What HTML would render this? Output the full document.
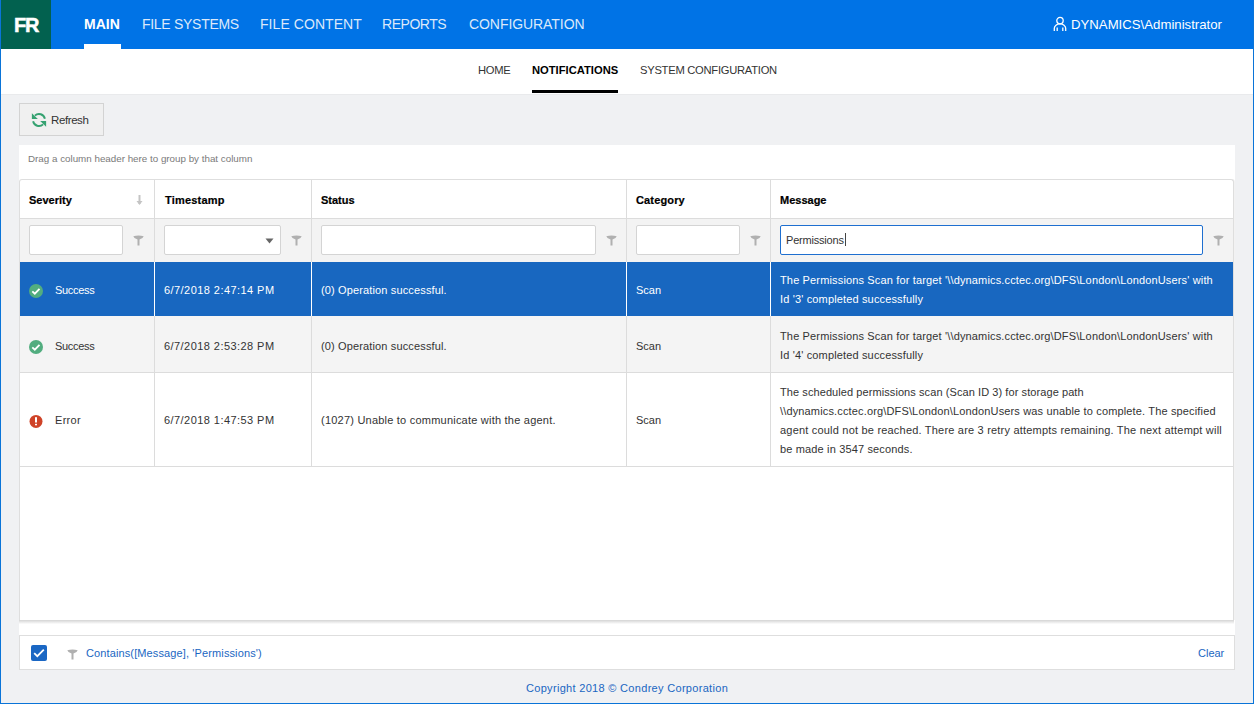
<!DOCTYPE html>
<html><head><meta charset="utf-8">
<style>
*{box-sizing:border-box;}
html,body{margin:0;padding:0;}
body{width:1254px;height:704px;overflow:hidden;position:relative;background:#f0f1f3;font-family:"Liberation Sans",sans-serif;}
.abs{position:absolute;}
.t{position:absolute;white-space:nowrap;}
#hdr{left:0;top:0;width:1254px;height:49px;background:#0073e6;}
#logo{left:1px;top:0;width:50px;height:49px;background:#02614f;color:#fff;font-weight:bold;font-size:20px;line-height:50px;text-align:center;letter-spacing:-1.4px;-webkit-text-stroke:0.5px #fff;}
.nav{top:0;height:49px;line-height:49px;font-size:14px;color:#dce9fa;}
#sub{left:0;top:49px;width:1254px;height:46px;background:#fff;border-bottom:1px solid #e9eaec;}
.snav{top:49px;line-height:42px;font-size:11.2px;color:#333;}
#wl{left:0;top:0;width:1px;height:704px;background:#0a74d8;}
#wr{left:1253px;top:0;width:1px;height:704px;background:#0a74d8;}
#wb{left:0;top:703px;width:1254px;height:1px;background:#0a74d8;}
#btn{left:19px;top:103px;width:85px;height:33px;background:#f0f0f0;border:1px solid #d3d3d3;}
#grp{left:19px;top:145px;width:1216px;height:524px;background:#fff;}
#grid{left:19px;top:179px;width:1215px;height:441px;background:#fff;border:1px solid #dedede;border-bottom:none;border-radius:3px 3px 0 0;box-shadow:1px 0 0 rgba(0,0,0,.05);}
.vl{position:absolute;top:180px;width:1px;background:#dcdcdc;}
.hl{position:absolute;left:20px;width:1213px;height:1px;background:#dcdcdc;}
.hd{top:180px;line-height:38px;font-size:11px;font-weight:bold;color:#000;-webkit-text-stroke:0.2px #000;}
.inp{position:absolute;top:225px;height:30px;background:#fff;border:1px solid #d4d4d4;border-radius:2px;}
.cell{font-size:11px;color:#333;line-height:19px;}
.sel{color:#fff;}
.lnk{color:#1a66c2;}
</style></head><body>
<div id="hdr" class="abs"></div>
<div id="logo" class="abs">FR</div>
<div class="abs" style="left:84px;top:44px;width:37px;height:5px;background:#fff;"></div>
<div class="t nav" style="left:84px;color:#fff;font-weight:bold;font-size:14px;">MAIN</div>
<div class="t nav" style="left:142px;letter-spacing:-0.29px;">FILE SYSTEMS</div>
<div class="t nav" style="left:260px;letter-spacing:0.06px;">FILE CONTENT</div>
<div class="t nav" style="left:382px;letter-spacing:-0.47px;">REPORTS</div>
<div class="t nav" style="left:469px;letter-spacing:-0.07px;">CONFIGURATION</div>
<svg class="abs" style="left:1053px;top:16px" width="14" height="16" viewBox="0 0 14 16">
 <circle cx="7" cy="4.6" r="3.2" fill="none" stroke="#fff" stroke-width="1.3"/>
 <path d="M1.3 15 V12.3 A5.7 4.4 0 0 1 12.7 12.3 V15" fill="none" stroke="#fff" stroke-width="1.3"/>
 <path d="M4.2 11.6 V15 M9.8 11.6 V15" stroke="#fff" stroke-width="1.3"/>
</svg>
<div class="t nav" style="left:1071px;color:#fff;font-size:13.2px;">DYNAMICS\Administrator</div>

<div id="sub" class="abs"></div>
<div class="t snav" style="left:478px;letter-spacing:-0.3px;">HOME</div>
<div class="t snav" style="left:532px;color:#000;font-weight:bold;">NOTIFICATIONS</div>
<div class="abs" style="left:532px;top:90px;width:86px;height:3px;background:#000;"></div>
<div class="t snav" style="left:640px;letter-spacing:-0.26px;">SYSTEM CONFIGURATION</div>

<div id="btn" class="abs"></div>
<svg class="abs" style="left:31px;top:112px" width="16" height="16" viewBox="0 0 16 16">
 <path d="M13.9 6.8 A6 6 0 0 0 3.9 3.6" fill="none" stroke="#36a271" stroke-width="1.9"/>
 <path d="M0.9 1.2 L0.9 7.1 L6.8 7.1 Z" fill="#36a271"/>
 <path d="M2.1 9.2 A6 6 0 0 0 12.1 12.4" fill="none" stroke="#36a271" stroke-width="1.9"/>
 <path d="M15.1 14.8 L15.1 8.9 L9.2 8.9 Z" fill="#36a271"/>
</svg>
<div class="t" style="left:51px;top:110px;font-size:11.5px;line-height:20px;color:#333;letter-spacing:-0.4px;">Refresh</div>

<div id="grp" class="abs"></div>
<div class="t" style="left:28px;top:149px;font-size:9.8px;line-height:20px;color:#7a7a7a;">Drag a column header here to group by that column</div>

<div id="grid" class="abs"></div>
<!-- filter row bg -->
<div class="abs" style="left:20px;top:219px;width:1213px;height:43px;background:#f3f3f3;"></div>
<div class="hl" style="top:218px;"></div>
<!-- rows -->
<div class="abs" style="left:20px;top:262px;width:1213px;height:54px;background:#1867c0;"></div>
<div class="abs" style="left:20px;top:316px;width:1213px;height:56px;background:#f4f4f4;"></div>
<div class="hl" style="top:372px;"></div>
<div class="hl" style="top:466px;"></div>
<!-- vertical lines -->
<div class="vl" style="left:154px;height:286px;"></div>
<div class="vl" style="left:311px;height:286px;"></div>
<div class="vl" style="left:626px;height:286px;"></div>
<div class="vl" style="left:770px;height:286px;"></div>
<div class="abs" style="left:154px;top:262px;width:1px;height:54px;background:#fff;"></div>
<div class="abs" style="left:311px;top:262px;width:1px;height:54px;background:#fff;"></div>
<div class="abs" style="left:626px;top:262px;width:1px;height:54px;background:#fff;"></div>
<div class="abs" style="left:770px;top:262px;width:1px;height:54px;background:#fff;"></div>

<!-- headers -->
<div class="t hd" style="left:29px;top:181px;">Severity</div>
<div class="t hd" style="left:165px;top:181px;letter-spacing:0.2px;">Timestamp</div>
<div class="t hd" style="left:321px;top:181px;">Status</div>
<div class="t hd" style="left:636px;top:181px;letter-spacing:0.15px;">Category</div>
<div class="t hd" style="left:780px;top:181px;">Message</div>
<svg class="abs" style="left:135px;top:194px" width="9" height="12" viewBox="0 0 9 12">
 <path d="M4.5 1 V10" stroke="#c4c4c4" stroke-width="2"/>
 <path d="M1.5 7 L4.5 11 L7.5 7 Z" fill="#c4c4c4"/>
</svg>

<!-- filter inputs -->
<div class="inp" style="left:29px;width:94px;"></div>
<div class="inp" style="left:164px;width:117px;"></div>
<div class="inp" style="left:321px;width:275px;"></div>
<div class="inp" style="left:636px;width:104px;"></div>
<div class="inp" style="left:780px;width:423px;border-color:#1e6fd0;"></div>
<svg class="abs" style="left:265px;top:238px" width="9" height="6" viewBox="0 0 9 6"><path d="M0.5 0.5 H8.5 L4.5 5.5 Z" fill="#666"/></svg>
<div class="t" style="left:786px;top:230px;font-size:11px;line-height:20px;color:#333;letter-spacing:-0.2px;">Permissions<span style="display:inline-block;width:1px;height:13px;background:#444;vertical-align:-2px;margin-left:1px;"></span></div>

<!-- filter icons -->
<svg class="abs" style="left:133px;top:235px" width="11" height="12" viewBox="0 0 11 12"><path d="M0.3 1.2 Q5.5 0 10.7 1.2 Q9.8 3.9 6.5 4.4 V10.5 H4.5 V4.4 Q1.2 3.9 0.3 1.2 Z" fill="#b0b0b0"/></svg>
<svg class="abs" style="left:291px;top:235px" width="11" height="12" viewBox="0 0 11 12"><path d="M0.3 1.2 Q5.5 0 10.7 1.2 Q9.8 3.9 6.5 4.4 V10.5 H4.5 V4.4 Q1.2 3.9 0.3 1.2 Z" fill="#b0b0b0"/></svg>
<svg class="abs" style="left:606px;top:235px" width="11" height="12" viewBox="0 0 11 12"><path d="M0.3 1.2 Q5.5 0 10.7 1.2 Q9.8 3.9 6.5 4.4 V10.5 H4.5 V4.4 Q1.2 3.9 0.3 1.2 Z" fill="#b0b0b0"/></svg>
<svg class="abs" style="left:750px;top:235px" width="11" height="12" viewBox="0 0 11 12"><path d="M0.3 1.2 Q5.5 0 10.7 1.2 Q9.8 3.9 6.5 4.4 V10.5 H4.5 V4.4 Q1.2 3.9 0.3 1.2 Z" fill="#b0b0b0"/></svg>
<svg class="abs" style="left:1213px;top:235px" width="11" height="12" viewBox="0 0 11 12"><path d="M0.3 1.2 Q5.5 0 10.7 1.2 Q9.8 3.9 6.5 4.4 V10.5 H4.5 V4.4 Q1.2 3.9 0.3 1.2 Z" fill="#b0b0b0"/></svg>

<!-- row 1 -->
<svg class="abs" style="left:29px;top:284px" width="14" height="14" viewBox="0 0 14 14"><circle cx="7" cy="7" r="7" fill="#52ad7f"/><path d="M3.3 7.3 L5.8 9.7 L10.5 4.8" fill="none" stroke="#fff" stroke-width="1.8"/></svg>
<div class="t cell sel" style="left:55px;top:281px;letter-spacing:-0.30px;">Success</div>
<div class="t cell sel" style="left:164px;top:281px;letter-spacing:0.44px;">6/7/2018 2:47:14 PM</div>
<div class="t cell sel" style="left:321px;top:281px;letter-spacing:0.14px;">(0) Operation successful.</div>
<div class="t cell sel" style="left:636px;top:281px;">Scan</div>
<div class="t cell sel" style="left:780px;top:271px;letter-spacing:0.15px;">The Permissions Scan for target '\\dynamics.cctec.org\DFS\London\LondonUsers' with</div>
<div class="t cell sel" style="left:780px;top:290px;letter-spacing:0.15px;">Id '3' completed successfully</div>

<!-- row 2 -->
<svg class="abs" style="left:29px;top:340px" width="14" height="14" viewBox="0 0 14 14"><circle cx="7" cy="7" r="7" fill="#52ad7f"/><path d="M3.3 7.3 L5.8 9.7 L10.5 4.8" fill="none" stroke="#fff" stroke-width="1.8"/></svg>
<div class="t cell" style="left:55px;top:337px;letter-spacing:-0.30px;">Success</div>
<div class="t cell" style="left:164px;top:337px;letter-spacing:0.44px;">6/7/2018 2:53:28 PM</div>
<div class="t cell" style="left:321px;top:337px;letter-spacing:0.14px;">(0) Operation successful.</div>
<div class="t cell" style="left:636px;top:337px;">Scan</div>
<div class="t cell" style="left:780px;top:327px;letter-spacing:0.15px;">The Permissions Scan for target '\\dynamics.cctec.org\DFS\London\LondonUsers' with</div>
<div class="t cell" style="left:780px;top:346px;letter-spacing:0.15px;">Id '4' completed successfully</div>

<!-- row 3 -->
<svg class="abs" style="left:29px;top:414px" width="14" height="14" viewBox="0 0 14 14"><circle cx="7" cy="7.4" r="6.5" fill="#cf4328"/><rect x="6" y="3.2" width="2" height="5.3" fill="#fff"/><rect x="6" y="9.8" width="2" height="1.5" fill="#fff"/></svg>
<div class="t cell" style="left:55px;top:411px;letter-spacing:0.3px;">Error</div>
<div class="t cell" style="left:164px;top:411px;letter-spacing:0.44px;">6/7/2018 1:47:53 PM</div>
<div class="t cell" style="left:321px;top:411px;letter-spacing:0.22px;">(1027) Unable to communicate with the agent.</div>
<div class="t cell" style="left:636px;top:411px;">Scan</div>
<div class="t cell" style="left:780px;top:383px;letter-spacing:0.08px;">The scheduled permissions scan (Scan ID 3) for storage path</div>
<div class="t cell" style="left:780px;top:402px;letter-spacing:0.15px;">\\dynamics.cctec.org\DFS\London\LondonUsers was unable to complete. The specified</div>
<div class="t cell" style="left:780px;top:421px;letter-spacing:0.2px;">agent could not be reached. There are 3 retry attempts remaining. The next attempt will</div>
<div class="t cell" style="left:780px;top:440px;letter-spacing:0.15px;">be made in 3547 seconds.</div>

<!-- gap + filter panel -->
<div class="abs" style="left:19px;top:620px;width:1215px;height:4px;background:linear-gradient(#d4d4d4,#e8e8e8 50%,#fdfdfd);"></div>
<div class="abs" style="left:19px;top:635px;width:1216px;height:35px;background:#fff;border:1px solid #dedede;"></div>
<div class="abs" style="left:31px;top:645px;width:16px;height:16px;background:#1a67c4;border-radius:2px;"></div>
<svg class="abs" style="left:31px;top:645px" width="16" height="16" viewBox="0 0 16 16"><path d="M3.2 8.2 L6.3 11.2 L12.8 4.6" fill="none" stroke="#fff" stroke-width="1.8"/></svg>
<svg class="abs" style="left:67px;top:649px" width="11" height="12" viewBox="0 0 11 12"><path d="M0.3 1.2 Q5.5 0 10.7 1.2 Q9.8 3.9 6.5 4.4 V10.5 H4.5 V4.4 Q1.2 3.9 0.3 1.2 Z" fill="#b0b0b0"/></svg>
<div class="t lnk" style="left:86px;top:643px;letter-spacing:0.12px;font-size:11px;line-height:20px;">Contains([Message], 'Permissions')</div>
<div class="t lnk" style="left:1198px;top:643px;font-size:11px;line-height:20px;">Clear</div>

<div class="t lnk" style="left:526px;top:678px;letter-spacing:0.31px;font-size:11px;line-height:20px;">Copyright 2018 © Condrey Corporation</div>

<div id="wl" class="abs"></div>
<div id="wr" class="abs"></div>
<div id="wb" class="abs"></div>
</body></html>
